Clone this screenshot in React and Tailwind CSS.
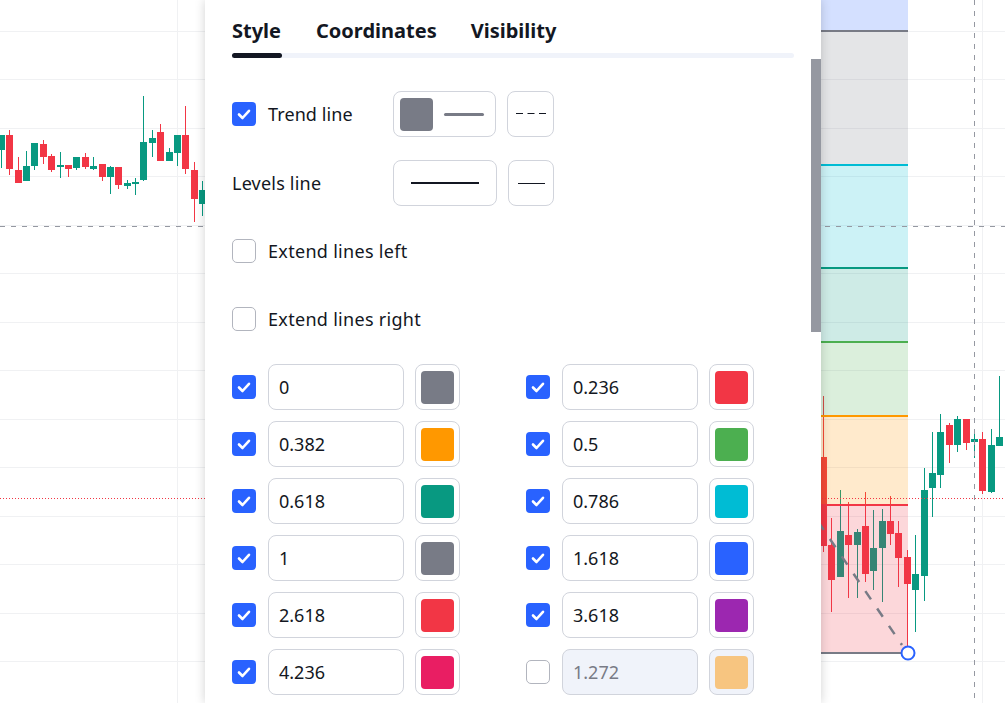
import React from "react";

const G = "#089981";
const R = "#f23645";

const leftCandles = [
  [-2, 135, 150, 135, 168, "g"],
  [6, 135, 169, 130, 175, "r"],
  [15, 170, 183, 157, 183, "r"],
  [23, 166, 181, 151, 181, "g"],
  [31, 143, 166, 143, 170, "g"],
  [40, 144, 157, 140, 164, "r"],
  [48, 156, 170, 154, 172, "r"],
  [57, 165, 167, 152, 178, "g"],
  [65, 165, 169, 165, 177, "r"],
  [73, 157, 168, 157, 170, "g"],
  [82, 157, 167, 153, 169, "r"],
  [90, 166, 169, 157, 170, "g"],
  [99, 164, 177, 164, 181, "r"],
  [107, 167, 177, 166, 194, "g"],
  [115, 167, 185, 167, 189, "r"],
  [124, 183, 186, 180, 189, "g"],
  [132, 182, 184, 178, 195, "g"],
  [140, 142, 180, 96, 181, "g"],
  [149, 138, 143, 130, 157, "g"],
  [157, 132, 161, 124, 161, "r"],
  [166, 152, 161, 148, 161, "g"],
  [174, 135, 153, 135, 166, "g"],
  [182, 135, 169, 106, 174, "r"],
  [191, 170, 199, 162, 222, "r"],
  [199, 190, 204, 181, 216, "g"],
];

const rightCandles = [
  [820, 457, 546, 396, 552, "r"],
  [828, 545, 580, 518, 612, "r"],
  [837, 531, 577, 490, 577, "g"],
  [845, 535, 545, 502, 598, "r"],
  [854, 532, 545, 529, 598, "g"],
  [862, 526, 574, 492, 582, "r"],
  [870, 548, 571, 510, 590, "g"],
  [879, 521, 548, 509, 602, "g"],
  [887, 521, 534, 496, 545, "r"],
  [895, 533, 558, 521, 587, "r"],
  [904, 557, 584, 550, 648, "r"],
  [912, 574, 590, 535, 632, "g"],
  [921, 490, 576, 468, 601, "g"],
  [929, 473, 488, 432, 517, "g"],
  [937, 432, 475, 414, 488, "g"],
  [946, 425, 445, 423, 463, "r"],
  [954, 419, 445, 416, 452, "g"],
  [963, 419, 443, 419, 450, "r"],
  [971, 439, 442, 431, 458, "g"],
  [979, 439, 491, 432, 494, "r"],
  [988, 445, 492, 429, 493, "g"],
  [996, 437, 446, 376, 446, "g"],
];

const fibBands = [
  [-10, 31, "#2962ff"],
  [31, 165, "#787b86"],
  [165, 268, "#00bcd4"],
  [268, 342, "#089981"],
  [342, 416, "#4caf50"],
  [416, 505, "#ff9800"],
  [505, 653, "#f23645"],
];

const fibLines = [
  [31, "#787b86"],
  [165, "#00bcd4"],
  [268, "#089981"],
  [342, "#4caf50"],
  [416, "#ff9800"],
  [505, "#f23645"],
  [653, "#787b86"],
];

function Candle({ c }) {
  const [x, bt, bb, wt, wb, col] = c;
  const color = col === "g" ? G : R;
  return (
    <g>
      <rect x={x + 3} y={wt} width={1} height={wb - wt} fill={color} />
      <rect x={x} y={bt} width={7} height={Math.max(bb - bt, 1)} fill={color} />
    </g>
  );
}

function Chart() {
  const hLines = [];
  for (let i = 0; i < 14; i++) hLines.push(30.5 + 48.5 * i);
  return (
    <svg width="1005" height="703" className="absolute inset-0 block">
      <rect width="1005" height="703" fill="#ffffff" />
      {hLines.map((y) => (
        <line key={y} x1="0" x2="1005" y1={Math.round(y) + 0.5} y2={Math.round(y) + 0.5} stroke="#f0f1f3" strokeWidth="1" />
      ))}
      <line x1="177.5" x2="177.5" y1="0" y2="703" stroke="#f0f1f3" />
      <line x1="982.5" x2="982.5" y1="0" y2="703" stroke="#f0f1f3" />
      {leftCandles.map((c, i) => (
        <Candle key={"l" + i} c={c} />
      ))}
      {rightCandles.map((c, i) => (
        <Candle key={"r" + i} c={c} />
      ))}
      {fibBands.map(([a, b, col]) => (
        <rect key={a} x="700" y={a} width="208" height={b - a} fill={col} fillOpacity="0.2" />
      ))}
      {fibLines.map(([y, col]) => (
        <rect key={y} x="700" y={y - 1} width="208" height="2" fill={col} />
      ))}
      <line x1="700" y1="348" x2="902" y2="645" stroke="#787b86" strokeWidth="2.5" strokeDasharray="10 11" />
      <line x1="0" x2="1005" y1="226.5" y2="226.5" stroke="#9598a1" strokeWidth="1" strokeDasharray="5 6" />
      <line x1="974.5" x2="974.5" y1="0" y2="703" stroke="#9598a1" strokeWidth="1" strokeDasharray="5 6" />
      <line x1="0" x2="1005" y1="498.5" y2="498.5" stroke="#f23645" strokeWidth="1" strokeDasharray="1 2" />
      <circle cx="908" cy="653" r="6.5" fill="#ffffff" stroke="#2962ff" strokeWidth="2" />
    </svg>
  );
}

function Check({ checked }) {
  if (checked) {
    return (
      <div className="w-[24px] h-[24px] rounded-[4px] bg-[#2962ff] flex items-center justify-center shrink-0">
        <svg width="24" height="24" viewBox="0 0 24 24">
          <path d="M7 12.5 L10.5 16 L17 8.8" fill="none" stroke="#ffffff" strokeWidth="2.6" strokeLinecap="round" strokeLinejoin="round" />
        </svg>
      </div>
    );
  }
  return <div className="w-[24px] h-[24px] rounded-[5px] border border-[#b2b5be] bg-white shrink-0" />;
}

const levels = [
  [true, "0", "#787b86"],
  [true, "0.236", "#f23645"],
  [true, "0.382", "#ff9800"],
  [true, "0.5", "#4caf50"],
  [true, "0.618", "#089981"],
  [true, "0.786", "#00bcd4"],
  [true, "1", "#787b86"],
  [true, "1.618", "#2962ff"],
  [true, "2.618", "#f23645"],
  [true, "3.618", "#9c27b0"],
  [true, "4.236", "#e91e63"],
  [false, "1.272", "#f7c580"],
];

function LevelRow({ on, value, color }) {
  return (
    <div className="flex items-center h-[46px]">
      <Check checked={on} />
      <div
        className={
          on
            ? "ml-[12px] w-[136px] h-[46px] rounded-[8px] border border-[#d1d4dc] bg-white flex items-center pl-[10px] text-[18px] text-[#131722]"
            : "ml-[12px] w-[136px] h-[46px] rounded-[8px] border border-[#d1d4dc] bg-[#f0f3fa] flex items-center pl-[10px] text-[18px] text-[#787b86]"
        }
      >
        {value}
      </div>
      <div
        className={
          on
            ? "ml-[11px] w-[45px] h-[46px] rounded-[8px] border border-[#d1d4dc] bg-white flex items-center justify-center"
            : "ml-[11px] w-[45px] h-[46px] rounded-[8px] border border-[#d1d4dc] bg-[#f0f3fa] flex items-center justify-center"
        }
      >
        <div className="w-[33px] h-[33px] rounded-[4px]" style={{ backgroundColor: color }} />
      </div>
    </div>
  );
}

export default function App() {
  return (
    <div
      className="relative w-[1005px] h-[703px] overflow-hidden bg-white text-[#131722]"
      style={{ fontFamily: '"Noto Sans", "Open Sans", sans-serif' }}
    >
      <Chart />
      <div className="absolute left-[205px] top-0 w-[616px] h-[703px] bg-white shadow-[0_0_10px_rgba(0,0,0,0.18)]">
        <div className="px-[27px]">
          <div className="flex pt-[15px] h-[53px] text-[20px] font-bold leading-[32px]">
            <div>Style</div>
            <div className="ml-[35px]">Coordinates</div>
            <div className="ml-[34px]">Visibility</div>
          </div>
          <div className="h-[5px] rounded-full bg-[#f0f3fa] w-[562px]">
            <div className="h-[5px] w-[50px] rounded-full bg-[#131722]" />
          </div>

          <div className="mt-[33px] flex items-center h-[46px]">
            <div className="w-[161px] flex items-center gap-[12px]">
              <Check checked />
              <span className="text-[18px] tracking-[0.1px]">Trend line</span>
            </div>
            <div className="w-[103px] h-[46px] rounded-[8px] border border-[#d1d4dc] flex items-center pl-[6px]">
              <div className="w-[33px] h-[33px] rounded-[4px] bg-[#787b86]" />
              <div className="ml-[11px] w-[40px] h-[3px] rounded-full bg-[#787b86]" />
            </div>
            <div className="ml-[11px] w-[47px] h-[46px] rounded-[8px] border border-[#d1d4dc] flex items-center justify-center">
              <svg width="30" height="4">
                <line x1="0" x2="30" y1="1.5" y2="1.5" stroke="#131722" strokeWidth="1" strokeDasharray="7 4.5" />
              </svg>
            </div>
          </div>

          <div className="mt-[23px] flex items-center h-[46px]">
            <div className="w-[161px] text-[18px] tracking-[0.2px]">Levels line</div>
            <div className="w-[104px] h-[46px] rounded-[8px] border border-[#d1d4dc] flex items-center justify-center">
              <div className="w-[68px] h-[2px] bg-[#131722]" />
            </div>
            <div className="ml-[11px] w-[46px] h-[46px] rounded-[8px] border border-[#d1d4dc] flex items-center justify-center">
              <div className="w-[27px] h-[1px] bg-[#131722]" />
            </div>
          </div>

          <div className="mt-[33px] flex items-center gap-[12px] h-[24px]">
            <Check checked={false} />
            <span className="text-[18px] tracking-[0.3px]">Extend lines left</span>
          </div>
          <div className="mt-[44px] flex items-center gap-[12px] h-[24px]">
            <Check checked={false} />
            <span className="text-[18px] tracking-[0.3px]">Extend lines right</span>
          </div>

          <div className="mt-[33px] grid grid-cols-[228px_228px] gap-x-[66px] gap-y-[11px]">
            {levels.map(([on, v, c]) => (
              <LevelRow key={v} on={on} value={v} color={c} />
            ))}
          </div>
        </div>
        <div className="absolute right-0 top-[59px] w-[10px] h-[273px] bg-[#9598a1]" />
      </div>
    </div>
  );
}
